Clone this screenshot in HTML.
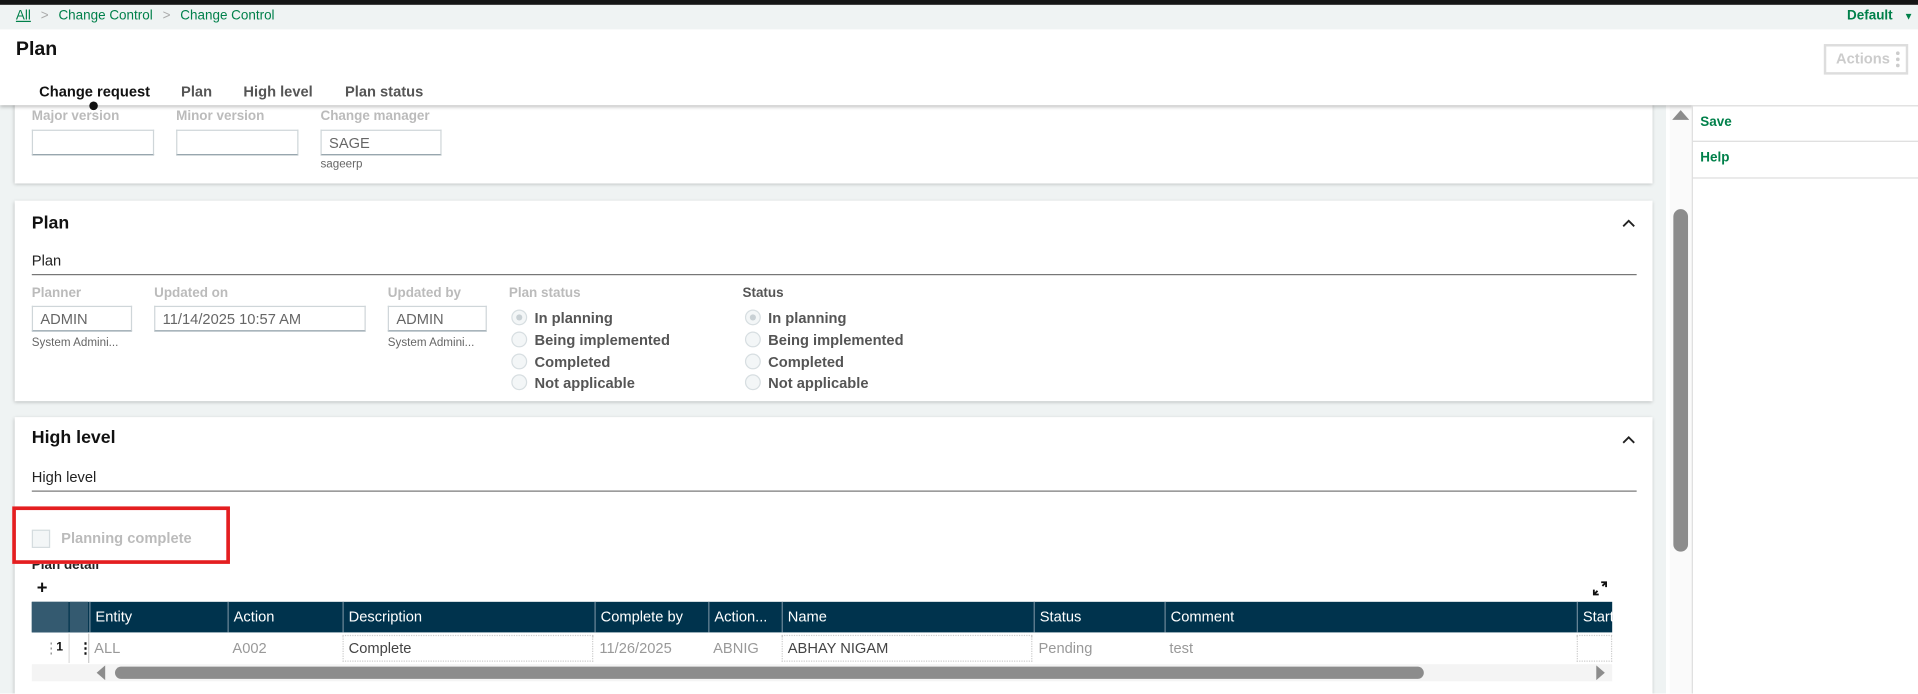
<!DOCTYPE html>
<html><head><meta charset="utf-8"><style>
*{box-sizing:border-box;margin:0;padding:0}
html,body{width:1918px;height:693px;overflow:hidden;background:#fff}
#w{position:absolute;left:0;top:0;width:1568px;height:567px;transform:scale(1.22321);transform-origin:0 0;font-family:"Liberation Sans Narrow","Liberation Sans",sans-serif;color:#333;overflow:hidden}
.a{position:absolute;white-space:nowrap}
.card{position:absolute;left:12px;width:1339px;background:#fff;box-shadow:0 1px 3px rgba(0,0,0,.25)}
.lbl{position:absolute;font-size:11px;font-weight:bold;color:#bbb}
.inp{position:absolute;height:21px;border:1px solid #cfd6d9;border-bottom:1px solid #8a9aa3;font-size:12px;color:#666;padding:3px 6px}
.sub{position:absolute;font-size:9.5px;color:#666}
.rad{position:absolute;width:13px;height:13px;border-radius:50%;border:1px solid #d7dee1;background:#f3f6f7}
.rt{position:absolute;font-size:12px;font-weight:bold;color:#555}
.th{position:absolute;top:0;height:25px;line-height:25px;font-size:12px;color:#fff;padding-left:4px;border-left:1px solid #6b8798}
.td{position:absolute;top:0;height:24px;line-height:24px;font-size:12px;color:#999;padding-left:4px}
</style></head><body><div id="w">
<div class="a" style="left:0;top:86px;width:1362px;height:481px;background:#eff3f3"></div>
<!-- card1 -->
<div class="card" style="top:80px;height:70px"></div>
<div class="lbl" style="left:26px;top:89px">Major version</div>
<div class="lbl" style="left:144px;top:89px">Minor version</div>
<div class="lbl" style="left:262px;top:89px">Change manager</div>
<div class="inp" style="left:26px;top:106px;width:100px"></div>
<div class="inp" style="left:144px;top:106px;width:100px"></div>
<div class="inp" style="left:262px;top:106px;width:99px">SAGE</div>
<div class="sub" style="left:262px;top:129px">sageerp</div>

<div class="a" style="left:0;top:0;width:1568px;height:86px;background:#fff;box-shadow:0 2px 3px rgba(0,0,0,.25);z-index:3"></div>
<div class="a" style="left:0;top:0;width:1568px;height:4px;background:#151515;z-index:4"></div>
<div class="a" style="left:0;top:4px;width:1568px;height:20px;background:#eff3f3;z-index:4"></div>
<div class="a" style="left:13px;top:7px;font-size:11px;color:#00804a;z-index:5"><u>All</u> <span style="color:#aaa;margin:0 5px">&gt;</span> Change Control <span style="color:#aaa;margin:0 5px">&gt;</span> Change Control</div>
<div class="a" style="left:1510px;top:7px;font-size:11px;font-weight:bold;color:#00804a;z-index:5">Default <span style="font-size:8px;margin-left:6px">▼</span></div>
<div class="a" style="left:13px;top:32px;font-size:16px;font-weight:bold;color:#111;z-index:5">Plan</div>
<div class="a" style="left:1491px;top:36px;width:69px;height:25px;border:2px solid #ddd;font-size:12px;font-weight:bold;color:#ccc;padding:3px 0 0 8px;z-index:5">Actions<span style="position:absolute;right:5px;top:4px;width:3px;height:3px;border-radius:50%;background:#ccc;box-shadow:0 5px 0 #ccc,0 10px 0 #ccc"></span></div>
<div class="a" style="left:32px;top:68px;font-size:12px;font-weight:bold;color:#111;z-index:5">Change request</div>
<div class="a" style="left:148px;top:68px;font-size:12px;font-weight:bold;color:#555;z-index:5">Plan</div>
<div class="a" style="left:199px;top:68px;font-size:12px;font-weight:bold;color:#555;z-index:5">High level</div>
<div class="a" style="left:282px;top:68px;font-size:12px;font-weight:bold;color:#555;z-index:5">Plan status</div>
<div class="a" style="left:73px;top:83px;width:7px;height:7px;border-radius:50%;background:#111;z-index:6"></div>
<!-- card2 -->
<div class="card" style="top:164px;height:164px"></div>
<div class="a" style="left:26px;top:175px;font-size:14.5px;font-weight:bold;color:#111">Plan</div>
<svg class="a" style="left:1326px;top:179px" width="11" height="7"><path d="M1 6L5.5 1.5L10 6" stroke="#222" stroke-width="1.5" fill="none"/></svg>
<div class="a" style="left:26px;top:206px;font-size:12px;color:#222">Plan</div>
<div class="a" style="left:26px;top:224px;width:1312px;height:1px;background:#777"></div>
<div class="lbl" style="left:26px;top:234px">Planner</div>
<div class="lbl" style="left:126px;top:234px">Updated on</div>
<div class="lbl" style="left:317px;top:234px">Updated by</div>
<div class="lbl" style="left:416px;top:234px">Plan status</div>
<div class="lbl" style="left:607px;top:234px;color:#555">Status</div>
<div class="inp" style="left:26px;top:250px;width:82px">ADMIN</div>
<div class="inp" style="left:126px;top:250px;width:173px">11/14/2025 10:57 AM</div>
<div class="inp" style="left:317px;top:250px;width:81px">ADMIN</div>
<div class="sub" style="left:26px;top:275px">System Admini...</div>
<div class="sub" style="left:317px;top:275px">System Admini...</div>
<div class="rad" style="left:418px;top:253px"><div style="margin:3px;width:5px;height:5px;border-radius:50%;background:#c8d0d4"></div></div>
<div class="rad" style="left:418px;top:271px"></div><div class="rad" style="left:418px;top:289px"></div><div class="rad" style="left:418px;top:306px"></div>
<div class="rt" style="left:437px;top:253px">In planning</div><div class="rt" style="left:437px;top:271px">Being implemented</div><div class="rt" style="left:437px;top:289px">Completed</div><div class="rt" style="left:437px;top:306px">Not applicable</div>
<div class="rad" style="left:609px;top:253px"><div style="margin:3px;width:5px;height:5px;border-radius:50%;background:#c8d0d4"></div></div>
<div class="rad" style="left:609px;top:271px"></div><div class="rad" style="left:609px;top:289px"></div><div class="rad" style="left:609px;top:306px"></div>
<div class="rt" style="left:628px;top:253px">In planning</div><div class="rt" style="left:628px;top:271px">Being implemented</div><div class="rt" style="left:628px;top:289px">Completed</div><div class="rt" style="left:628px;top:306px">Not applicable</div>
<!-- card3 -->
<div class="card" style="top:341px;height:240px"></div>
<div class="a" style="left:26px;top:350px;font-size:14.5px;font-weight:bold;color:#111">High level</div>
<svg class="a" style="left:1326px;top:356px" width="11" height="7"><path d="M1 6L5.5 1.5L10 6" stroke="#222" stroke-width="1.5" fill="none"/></svg>
<div class="a" style="left:26px;top:383px;font-size:12px;color:#222">High level</div>
<div class="a" style="left:26px;top:401px;width:1312px;height:1px;background:#777"></div>
<div class="a" style="left:26px;top:456px;font-size:11px;font-weight:bold;color:#222">Plan detail</div>
<div class="a" style="left:10px;top:414px;width:178px;height:47px;border:3px solid #e41e20;background:#fff"></div>
<div class="a" style="left:26px;top:433px;width:15px;height:15px;border:1px solid #d5dcdf;background:#f3f6f7"></div>
<div class="a" style="left:50px;top:433px;font-size:12px;font-weight:bold;color:#bbb">Planning complete</div>
<div class="a" style="left:30px;top:472px;font-size:15px;font-weight:bold;color:#111">+</div>
<svg class="a" style="left:1302px;top:475px" width="12" height="12"><path d="M7 1H11V5M11 1L8 4M5 11H1V7M1 11L4 8" stroke="#111" stroke-width="1.5" fill="none"/></svg>
<!-- table -->
<div class="a" style="left:26px;top:492px;width:1292px;height:25px;background:#00334d">
<div class="a" style="left:0;top:0;width:30px;height:25px;background:#345a70"></div>
<div class="a" style="left:31px;top:0;width:15px;height:25px;background:#345a70"></div>
<div class="th" style="left:47px">Entity</div><div class="th" style="left:160px">Action</div><div class="th" style="left:254px">Description</div><div class="th" style="left:460px">Complete by</div><div class="th" style="left:553px">Action...</div><div class="th" style="left:613px">Name</div><div class="th" style="left:819px">Status</div><div class="th" style="left:926px">Comment</div><div class="th" style="left:1263px">Start</div>
</div>
<div class="a" style="left:26px;top:518px;width:1292px;height:24px;background:#fff">
<div class="td" style="left:6px;color:#999">⋮</div><div class="td" style="left:16px;color:#111;font-weight:bold;font-size:10px">1</div>
<div class="a" style="left:30px;top:0;width:1px;height:24px;background:#ddd"></div>
<div class="td" style="left:34px;color:#111;font-weight:bold">⋮</div>
<div class="a" style="left:46px;top:0;width:1px;height:24px;background:#ccc"></div>
<div class="td" style="left:47px">ALL</div><div class="td" style="left:160px">A002</div>
<div class="td" style="left:254px;width:205px;color:#444;border:1px dotted #ccc;height:22px;line-height:20px;top:1px">Complete</div>
<div class="td" style="left:460px">11/26/2025</div><div class="td" style="left:553px">ABNIG</div>
<div class="td" style="left:613px;width:205px;color:#444;border:1px dotted #ccc;height:22px;line-height:20px;top:1px">ABHAY NIGAM</div>
<div class="td" style="left:819px">Pending</div><div class="td" style="left:926px">test</div>
<div class="td" style="left:1263px;width:29px;border:1px dotted #ccc;height:22px;top:1px"></div>
</div>
<div class="a" style="left:26px;top:543px;width:1292px;height:14px;background:#f4f4f4"></div>
<svg class="a" style="left:78px;top:544px" width="10" height="12"><path d="M8 0L1 6L8 12Z" fill="#8c8c8c"/></svg>
<div class="a" style="left:94px;top:545px;width:1070px;height:10px;border-radius:5px;background:#8c8c8c"></div>
<svg class="a" style="left:1304px;top:544px" width="10" height="12"><path d="M1 0L8 6L1 12Z" fill="#8c8c8c"/></svg>
<!-- vertical scrollbar -->
<div class="a" style="left:1365px;top:86px;width:18px;height:481px;background:#fafafa"></div>
<svg class="a" style="left:1367px;top:89px" width="14" height="10"><path d="M0 9L7 1L14 9Z" fill="#8c8c8c"/></svg>
<div class="a" style="left:1368px;top:171px;width:12px;height:280px;border-radius:6px;background:#8c8c8c"></div>
<!-- right panel -->
<div class="a" style="left:1383px;top:86px;width:185px;height:481px;background:#fff;border-left:1px solid #ddd;z-index:4"></div>
<div class="a" style="left:1383px;top:86px;width:185px;height:1px;background:#ddd;z-index:5"></div>
<div class="a" style="left:1390px;top:94px;font-size:11px;font-weight:bold;color:#00804a;z-index:5">Save</div>
<div class="a" style="left:1384px;top:115px;width:184px;height:1px;background:#ddd;z-index:5"></div>
<div class="a" style="left:1390px;top:123px;font-size:11px;font-weight:bold;color:#00804a;z-index:5">Help</div>
<div class="a" style="left:1384px;top:145px;width:184px;height:1px;background:#ddd;z-index:5"></div>
</div></body></html>
